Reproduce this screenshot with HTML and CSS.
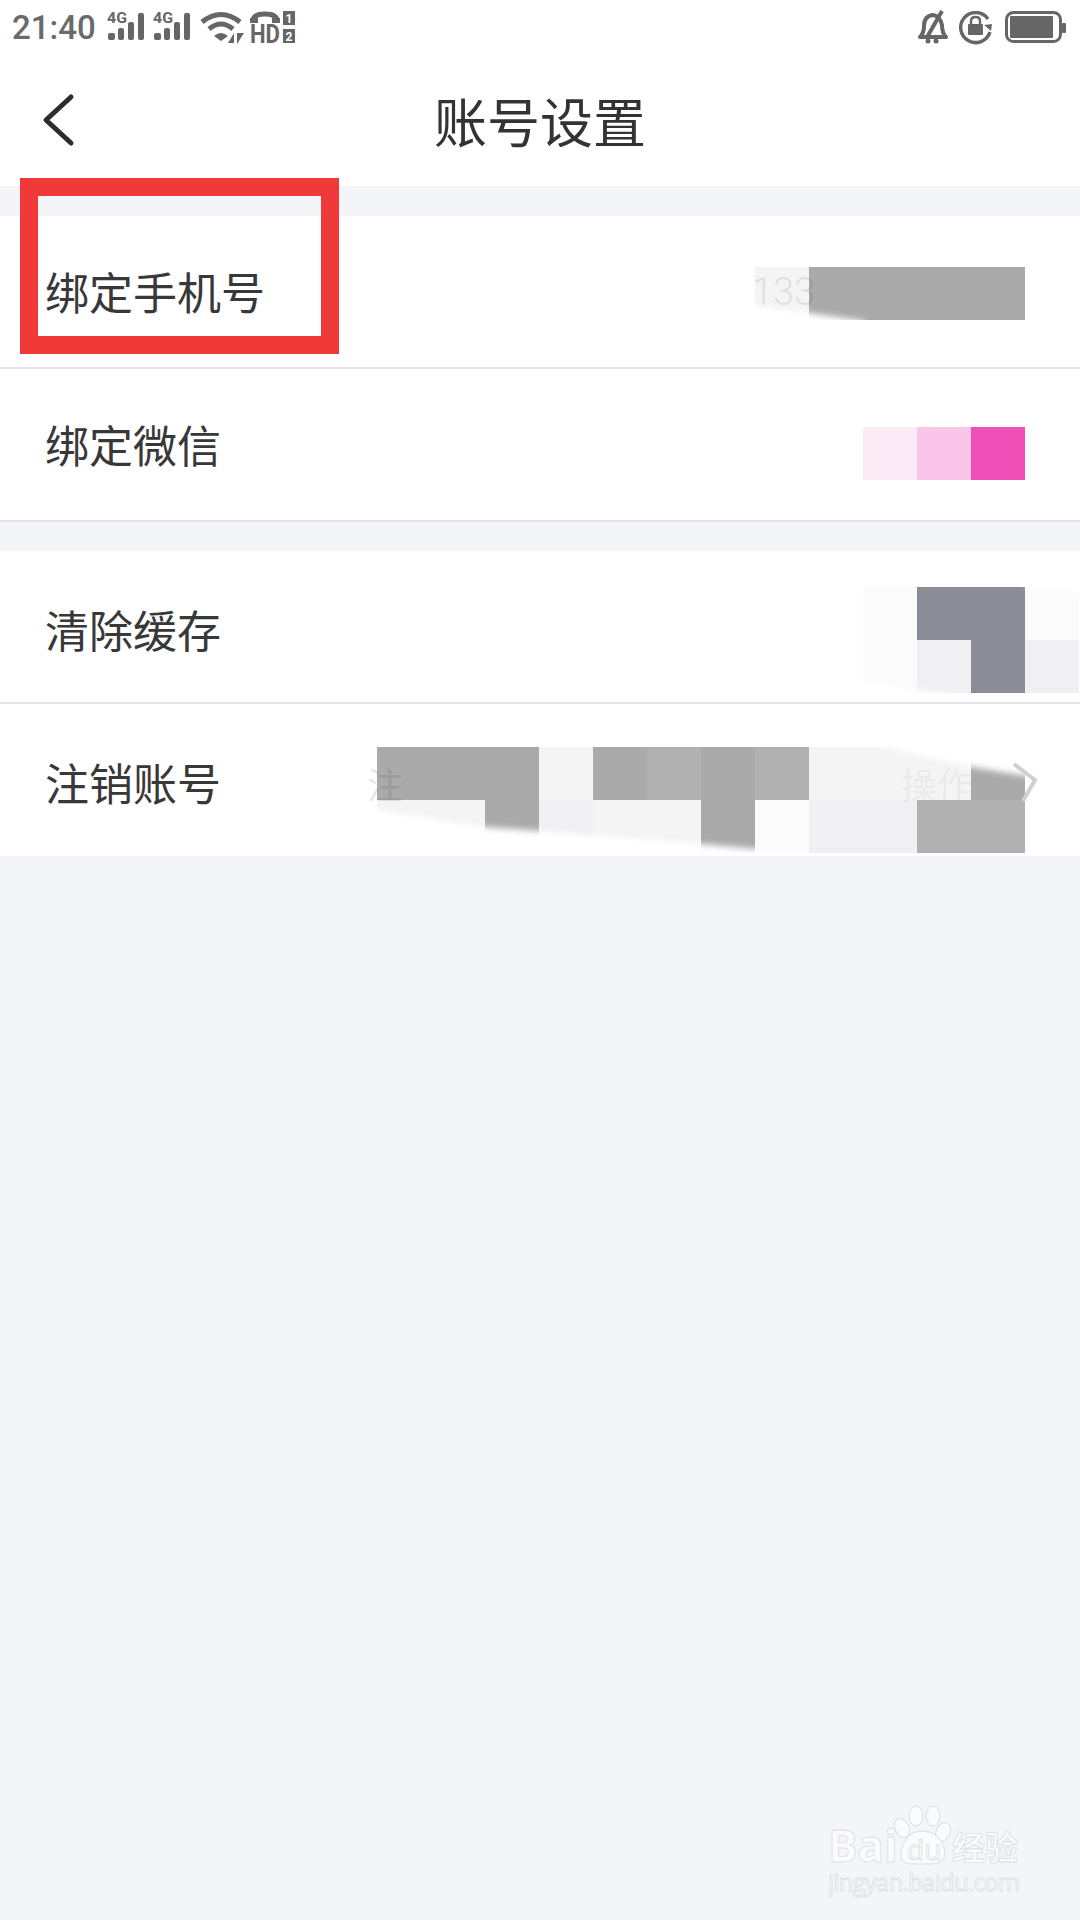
FILE: index.html
```html
<!DOCTYPE html>
<html lang="zh-CN">
<head>
  <meta charset="UTF-8" />
  <meta name="viewport" content="width=device-width, initial-scale=1.0"/>
  <title>账号设置</title>
  <link rel="stylesheet" href="styles.css">
</head>
<body>
  <div class="screen">
    <!-- Status bar -->
    <div class="status-bar">
      <div class="status-left">
        <span class="clock">21:40</span>
        <svg class="icon-signal" width="38" height="36" viewBox="0 -6 38 36">
          <text class="icon-label" x="0" y="11" textLength="20" lengthAdjust="spacingAndGlyphs">4G</text>
          <rect x="1" y="21" width="7" height="7" rx="2"/>
          <rect x="11" y="16" width="6" height="12" rx="2"/>
          <rect x="21" y="10" width="6" height="18" rx="2"/>
          <rect x="31" y="1" width="6" height="27" rx="2"/>
        </svg>
        <svg class="icon-signal" width="38" height="36" viewBox="0 -6 38 36">
          <text class="icon-label" x="0" y="11" textLength="20" lengthAdjust="spacingAndGlyphs">4G</text>
          <rect x="1" y="21" width="7" height="7" rx="2"/>
          <rect x="11" y="16" width="6" height="12" rx="2"/>
          <rect x="21" y="10" width="6" height="18" rx="2"/>
          <rect x="31" y="1" width="6" height="27" rx="2"/>
        </svg>
        <svg class="icon-wifi" width="44" height="34" viewBox="0 0 44 34">
          <path class="line" d="M2 11 Q21 -4 40 11"/>
          <path class="line" d="M9 18 Q21 8 33 18"/>
          <path d="M14 25 Q21 19 28 25 L21 30 Z"/>
          <path d="M28 32 L34 22 L34 32 Z"/>
          <path d="M37 33 L37 22 L44 22 Z"/>
        </svg>
        <svg class="icon-hd" width="45" height="42" viewBox="0 0 45 42">
          <path class="line" d="M3 11 Q3 4 15 4 Q27 4 27 11"/>
          <rect x="0" y="8" width="8" height="5"/>
          <rect x="22" y="8" width="8" height="5"/>
          <text class="hd-label" x="0" y="33" textLength="30" lengthAdjust="spacingAndGlyphs">HD</text>
          <rect x="33" y="1" width="12" height="14"/>
          <rect x="33" y="19" width="12" height="14"/>
          <text class="sim-label" x="39" y="13">1</text>
          <text class="sim-label" x="39" y="31">2</text>
        </svg>
      </div>
      <div class="status-right">
        <svg class="icon-bell" width="32" height="34" viewBox="0 0 32 34">
          <path class="line" d="M3 27 Q7 23 7 16 Q7 6 16 5 Q23 6 25 15 Q25 23 29 27 Z"/>
          <path class="line" d="M9 29 L25 1"/>
          <circle cx="11" cy="31" r="2.5"/>
          <circle cx="19" cy="31" r="2.5"/>
        </svg>
        <svg class="icon-lock" width="34" height="34" viewBox="0 0 34 34">
          <path class="line" d="M29 8 A15 15 0 1 0 31 21"/>
          <path d="M25 14 L33 13 L32 20 Z"/>
          <rect x="9" y="13" width="15" height="11" rx="1"/>
          <path class="line thin" d="M12 13 V10 Q12 6 16.5 6 Q21 6 21 10 V13"/>
        </svg>
        <svg class="icon-battery" width="61" height="32" viewBox="0 0 61 32">
          <rect class="line" x="1.5" y="1.5" width="54" height="29" rx="7"/>
          <rect x="5" y="5" width="43" height="22" rx="1"/>
          <rect x="57" y="12" width="4" height="10" rx="1"/>
        </svg>
      </div>
    </div>

    <!-- Title bar -->
    <div class="title-bar">
      <svg class="back-icon" width="34" height="54" viewBox="0 0 34 54">
        <path d="M29 4 L4 27 L29 50"/>
      </svg>
      <h1>账号设置</h1>
    </div>

    <!-- Account rows -->
    <div class="group">
      <div class="row">
        <span class="row-label">绑定手机号</span>
        <div class="mosaic mosaic-phone">
          <i class="light"></i><i class="gray"></i><i class="gray"></i><i class="gray"></i><i class="gray"></i>
          <span class="ghost ghost-phone">133</span>
          <svg class="smudge" width="270" height="53" viewBox="0 0 270 53">
            <path d="M-8 38 L54 46 L110 54 L110 60 L-8 60 Z"/>
          </svg>
        </div>
      </div>
      <div class="row">
        <span class="row-label">绑定微信</span>
        <div class="mosaic mosaic-wechat">
          <i class="pink-1"></i><i class="pink-2"></i><i class="pink-3"></i>
        </div>
      </div>
    </div>

    <div class="group">
      <div class="row">
        <span class="row-label">清除缓存</span>
        <div class="mosaic mosaic-cache">
          <i class="faint"></i><i class="slate"></i><i class="slate"></i><i class="faint"></i>
          <i class="faint"></i><i class="pale"></i><i class="slate"></i><i class="pale"></i>
          <svg class="smudge" width="217" height="106" viewBox="0 0 217 106">
            <path d="M-4 92 L60 104 L110 110 L-4 110 Z"/>
            <path d="M164 -4 L225 -4 L225 8 Q190 2 164 0 Z"/>
          </svg>
        </div>
      </div>
      <div class="row row-last">
        <span class="row-label">注销账号</span>
        <div class="mosaic mosaic-cancel">
          <i class="gray"></i><i class="gray"></i><i class="gray"></i><i class="light"></i><i class="gray"></i><i class="silver"></i>
          <i class="gray"></i><i class="silver"></i><i class="light"></i><i class="light"></i><i class="light"></i><i class="gray"></i>
          <i class="light"></i><i class="light"></i><i class="gray"></i><i class="pale"></i><i class="light"></i><i class="light"></i>
          <i class="gray"></i><i class="faint"></i><i class="pale"></i><i class="pale"></i><i class="silver"></i><i class="silver"></i>
          <span class="ghost ghost-left">注</span>
          <span class="ghost ghost-right">操作</span>
          <svg class="smudge" width="648" height="106" viewBox="0 0 648 106">
            <path d="M-8 62 L108 80 L163 84 L324 97 L380 102 L432 107 L432 114 L-8 114 Z"/>
            <path d="M432 -6 L500 -2 L540 8 L595 20 L655 30 L655 -6 Z"/>
          </svg>
          <svg class="ghost-arrow" width="30" height="44" viewBox="0 0 30 44">
            <path d="M3 3 L24 19 L12 40"/>
          </svg>
        </div>
      </div>
    </div>

    <!-- Highlight around the phone row -->
    <div class="highlight"></div>

    <!-- Watermark -->
    <svg class="watermark" width="210" height="100" viewBox="0 0 210 100">
      <ellipse cx="74" cy="23" rx="7" ry="10" transform="rotate(-25 74 23)"/>
      <ellipse cx="88" cy="11" rx="7" ry="10"/>
      <ellipse cx="105" cy="11" rx="7" ry="10"/>
      <ellipse cx="115" cy="27" rx="7" ry="10" transform="rotate(25 115 27)"/>
      <path d="M73 48 Q76 26 94 26 Q112 26 117 46 Q118 60 102 59 L84 59 Q71 59 73 48 Z"/>
      <text class="wm-bai" x="0" y="57">Bai</text>
      <text class="wm-du" x="79" y="55">du</text>
      <text class="wm-cn" x="124" y="55">经验</text>
      <text class="wm-url" x="0" y="86" textLength="192">jingyan.baidu.com</text>
    </svg>
  </div>
</body>
</html>
```

FILE: styles.css
```css
body {
  margin: 0;
  font-family: "Noto Sans CJK SC", "Noto Sans", sans-serif;
  background-color: #f4f5f9;
  color: #333;
}

.screen {
  position: relative;
  width: 1080px;
  height: 1920px;
  overflow: hidden;
}

/* Status bar */
.status-bar {
  display: flex;
  justify-content: space-between;
  align-items: flex-start;
  height: 60px;
  background-color: #fff;
  padding: 0 14px 0 12px;
  box-sizing: border-box;
}

.status-left,
.status-right {
  display: flex;
  align-items: flex-start;
  padding-top: 10px;
}

.clock {
  width: 95px;
  font-family: Roboto, sans-serif;
  font-weight: 500;
  font-size: 33px;
  line-height: 36px;
  color: #6a6a6a;
}

.status-bar svg {
  fill: #666;
}

.status-bar .line {
  fill: none;
  stroke: #666;
  stroke-width: 5;
}

.status-bar .thin {
  stroke-width: 3;
}

.icon-signal {
  margin-top: -4px;
  margin-right: 8px;
}

.icon-label {
  font-family: Roboto, sans-serif;
  font-weight: 700;
  font-size: 14px;
}

.icon-wifi {
  margin: 1px 6px 0 1px;
}

.hd-label {
  font-family: Roboto, sans-serif;
  font-weight: 700;
  font-size: 26px;
}

.sim-label {
  font-family: Roboto, sans-serif;
  font-weight: 700;
  font-size: 12px;
  text-anchor: middle;
  fill: #fff;
}

.icon-bell {
  margin-right: 10px;
}

.icon-bell .line {
  stroke-width: 4;
  stroke-linejoin: round;
}

.icon-lock {
  margin-top: 1px;
  margin-right: 12px;
}

.icon-lock .line {
  stroke-width: 3.5;
}

.icon-lock .thin {
  stroke-width: 2.5;
}

.icon-battery {
  margin-top: 1px;
}

.icon-battery .line {
  stroke-width: 3;
}

/* Title bar */
.title-bar {
  display: flex;
  justify-content: center;
  align-items: center;
  position: relative;
  height: 126px;
  background-color: #fff;
  margin-bottom: 30px;
}

.title-bar h1 {
  margin: 0 0 7px;
  font-weight: 400;
  font-size: 53px;
  color: #333;
}

.back-icon {
  position: absolute;
  left: 42px;
  top: 33px;
}

.back-icon path {
  fill: none;
  stroke: #2c2c30;
  stroke-width: 5;
  stroke-linecap: round;
  stroke-linejoin: round;
}

/* Rows */
.group {
  background-color: #fff;
  margin-bottom: 29px;
}

.row {
  display: flex;
  justify-content: space-between;
  align-items: flex-start;
  height: 151px;
  border-bottom: 2px solid #e3e3e7;
  padding-left: 45px;
  overflow: hidden;
}

.row-last {
  height: 152px;
  border-bottom: none;
}

.row-label {
  font-size: 44px;
  line-height: 151px;
  color: #383838;
}

.group + .group .row-label {
  padding-top: 3px;
}

/* Blurred-out values */
.mosaic {
  position: relative;
  display: grid;
  grid-auto-rows: 53px;
  grid-template-columns: repeat(auto-fill, 54px);
  margin-right: 55px;
}

.mosaic i {
  display: block;
}

.mosaic-phone {
  width: 270px;
  margin-top: 51px;
}

.mosaic-wechat {
  width: 162px;
  margin-top: 58px;
}

.mosaic-cache {
  width: 217px;
  margin-top: 36px;
  margin-right: 0;
}

.mosaic-cancel {
  width: 648px;
  margin-top: 43px;
}

.gray { background-color: #aaa; }
.silver { background-color: #b1b1b1; }
.light { background-color: #f4f4f4; }
.pale { background-color: #f0f0f2; }
.faint { background-color: #fbfbfb; }
.slate { background-color: #8c8c97; }
.pink-1 { background-color: #fcebf7; }
.pink-2 { background-color: #f9c5e8; }
.pink-3 { background-color: #f04fb8; }

.smudge {
  position: absolute;
  left: 0;
  top: 0;
  overflow: visible;
  fill: #fff;
  filter: blur(3px);
}

.ghost {
  position: absolute;
  color: rgba(0, 0, 0, 0.09);
  filter: blur(0.6px);
}

.ghost-phone {
  left: -3px;
  top: 3px;
  font-family: Roboto, sans-serif;
  font-weight: 300;
  font-size: 38px;
}

.ghost-left {
  left: -10px;
  top: 10px;
  font-size: 36px;
}

.ghost-right {
  left: 524px;
  top: 10px;
  font-size: 36px;
  color: rgba(0, 0, 0, 0.04);
}

.ghost-arrow {
  position: absolute;
  left: 634px;
  top: 14px;
  filter: blur(0.6px);
}

.ghost-arrow path {
  fill: none;
  stroke: #d0d0d0;
  stroke-width: 4;
}

/* Red highlight box */
.highlight {
  position: absolute;
  left: 20px;
  top: 178px;
  width: 283px;
  height: 140px;
  border: 18px solid #f03a3a;
}

/* Watermark */
.watermark {
  position: absolute;
  left: 828px;
  top: 1805px;
  fill: #fafbfd;
  stroke: #dcdde2;
  stroke-width: 1;
}

.watermark text {
  font-family: "Open Sans", sans-serif;
  stroke-width: 0.8;
}

.watermark .wm-bai {
  font-size: 44px;
  font-weight: 700;
}

.watermark .wm-du {
  font-size: 28px;
}

.watermark .wm-cn {
  font-family: "Noto Sans CJK SC", sans-serif;
  font-size: 33px;
  font-weight: 700;
}

.watermark .wm-url {
  font-size: 24px;
}
```
